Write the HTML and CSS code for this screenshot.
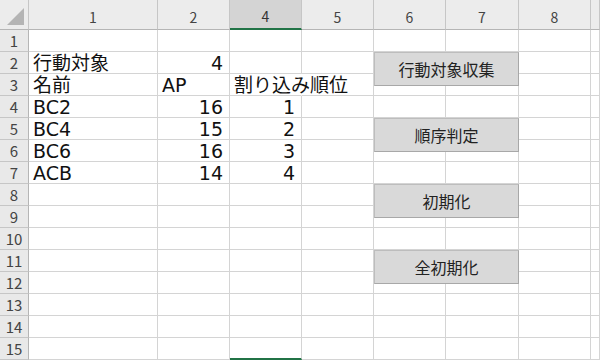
FILE: index.html
```html
<!DOCTYPE html>
<html lang="ja">
<head>
    <meta charset="UTF-8">
    <title>Sheet1</title>
    <link rel="stylesheet" href="styles.css">
</head>
<body>
    <div class="sheet">
        <table class="grid">
            <colgroup>
                <col class="w-rh"><col class="w-a"><col class="w-n"><col class="w-n"><col class="w-n"><col class="w-n"><col class="w-m"><col class="w-n"><col class="w-r">
            </colgroup>
            <thead>
                <tr class="head">
                    <th class="corner"></th><th>1</th><th>2</th><th class="sel">4</th><th>5</th><th>6</th><th>7</th><th>8</th><th></th>
                </tr>
            </thead>
            <tbody>
                <tr><th>1</th><td></td><td></td><td></td><td></td><td></td><td></td><td></td><td></td></tr>
                <tr><th>2</th><td>行動対象</td><td class="num">4</td><td></td><td></td><td></td><td></td><td></td><td></td></tr>
                <tr><th>3</th><td>名前</td><td>AP</td><td class="over">割り込み順位</td><td></td><td></td><td></td><td></td><td></td></tr>
                <tr><th>4</th><td>BC2</td><td class="num">16</td><td class="num">1</td><td></td><td></td><td></td><td></td><td></td></tr>
                <tr><th>5</th><td>BC4</td><td class="num">15</td><td class="num">2</td><td></td><td></td><td></td><td></td><td></td></tr>
                <tr><th>6</th><td>BC6</td><td class="num">16</td><td class="num">3</td><td></td><td></td><td></td><td></td><td></td></tr>
                <tr><th>7</th><td>ACB</td><td class="num">14</td><td class="num">4</td><td></td><td></td><td></td><td></td><td></td></tr>
                <tr><th>8</th><td></td><td></td><td></td><td></td><td></td><td></td><td></td><td></td></tr>
                <tr><th>9</th><td></td><td></td><td></td><td></td><td></td><td></td><td></td><td></td></tr>
                <tr><th>10</th><td></td><td></td><td></td><td></td><td></td><td></td><td></td><td></td></tr>
                <tr><th>11</th><td></td><td></td><td></td><td></td><td></td><td></td><td></td><td></td></tr>
                <tr><th>12</th><td></td><td></td><td></td><td></td><td></td><td></td><td></td><td></td></tr>
                <tr><th>13</th><td></td><td></td><td></td><td></td><td></td><td></td><td></td><td></td></tr>
                <tr><th>14</th><td></td><td></td><td></td><td></td><td></td><td></td><td></td><td></td></tr>
                <tr><th>15</th><td></td><td></td><td class="cur"></td><td></td><td></td><td></td><td></td><td></td></tr>
            </tbody>
        </table>
        <!-- マクロボタン -->
        <button class="macro b1">行動対象収集</button>
        <button class="macro b2">順序判定</button>
        <button class="macro b3">初期化</button>
        <button class="macro b4">全初期化</button>
    </div>
</body>
</html>
```

FILE: styles.css
```css
html,body{
    margin: 0;
    padding: 0;
    background: #fff;
    overflow: hidden;
}
.sheet{
    position: relative;
    width: 600px;
    height: 360px;
    overflow: hidden;
}
.grid{
    table-layout: fixed;
    width: 600px;
    border-collapse: separate;
    border-spacing: 0;
    font-family: "DejaVu Sans", "Noto Sans CJK JP", sans-serif;
    font-size: 19px;
    color: #111;
}
.w-rh{ width: 29px; }
.w-a{ width: 129px; }
.w-n{ width: 72px; }
.w-m{ width: 73px; }
.w-r{ width: 9px; }

.grid tr{
    height: 22px;
}
.grid td{
    border-right: 1px solid #d4d4d4;
    border-bottom: 1px solid #d4d4d4;
    padding: 0 4px;
    line-height: 20px;
    vertical-align: bottom;
    white-space: nowrap;
    overflow: visible;
}
.grid td.num{
    text-align: right;
    padding-right: 6px;
}
.grid td.over{
    border-right-color: transparent;
}
.grid td.cur{
    border-bottom: 2px solid #217346;
}

/* 見出し */
.grid th{
    font-family: "Noto Sans CJK JP", sans-serif;
    font-weight: 400;
    font-size: 15px;
    color: #444;
    background: #e9e9e9;
    border-right: 1px solid #c6c6c6;
    border-bottom: 1px solid #c6c6c6;
    padding: 0;
    line-height: 20px;
    text-align: center;
}
.grid .head{
    height: 30px;
}
.grid .head th{
    background: #ececec;
    border-bottom: 1px solid #b5b5b5;
    font-size: 14px;
    vertical-align: middle;
    padding-top: 4px;
}
.grid .head th.sel{
    background: #d4d4d4;
    color: #333;
    border-bottom: 2px solid #217346;
}
.grid .head th.corner{
    position: relative;
}
.grid .head th.corner::after{
    content: "";
    position: absolute;
    right: 4px;
    bottom: 4px;
    width: 17px;
    height: 17px;
    background: #b4b4b4;
    clip-path: polygon(100% 0, 100% 100%, 0 100%);
}
.grid tbody th{
    border-right: 1px solid #b5b5b5;
}

.macro{
    position: absolute;
    left: 374px;
    width: 145px;
    height: 34px;
    margin: 0;
    padding: 0;
    background: #d9d9d9;
    border: 1px solid #bdbdbd;
    border-right-color: #a8a8a8;
    border-bottom-color: #a8a8a8;
    font-family: "Noto Sans CJK JP", sans-serif;
    font-size: 16px;
    color: #222;
}
.b1{ top: 52px; }
.b2{ top: 118px; }
.b3{ top: 184px; }
.b4{ top: 250px; }
```
